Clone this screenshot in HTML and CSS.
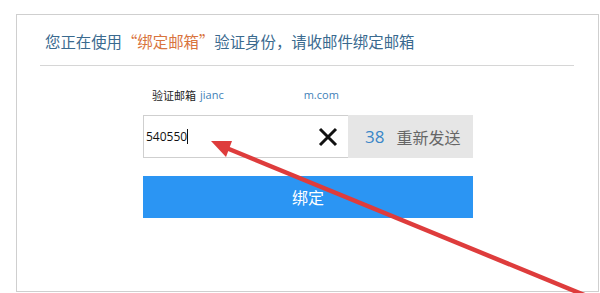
FILE: index.html
```html
<!DOCTYPE html>
<html lang="zh-CN">
<head>
    <meta charset="UTF-8">
    <meta name="viewport" content="width=device-width, initial-scale=1.0">
    <title>绑定邮箱</title>
    <link rel="stylesheet" href="styles.css">
</head>
<body>
    <div class="card">
        <h1 class="title">您正在使用<span class="hl">“绑定邮箱”</span>验证身份，请收邮件绑定邮箱</h1>
        <div class="divider"></div>

        <div class="form">
            <div class="email-row">
                <span class="label">验证邮箱</span>
                <span class="email">jianc</span>
                <span class="mask"></span>
                <span class="email">m.com</span>
            </div>

            <div class="code-row">
                <div class="code-input">
                    <span class="code-text">540550</span><span class="caret"></span>
                    <svg class="clear" width="20" height="20" viewBox="0 0 20 20">
                        <path d="M2 2 L18 18 M18 2 L2 18" stroke="#111" stroke-width="3" fill="none"/>
                    </svg>
                </div>
                <div class="resend"><span class="count">38</span>重新发送</div>
            </div>

            <button class="bind-btn">绑定</button>
        </div>
    </div>

    <!-- annotation arrow -->
    <svg class="arrow" width="600" height="293" viewBox="0 0 600 293">
        <line x1="224" y1="147" x2="594" y2="299" stroke="#de3c3c" stroke-width="4.5"/>
        <polygon points="211,141 232,141 226,157" fill="#de3c3c"/>
    </svg>
</body>
</html>
```

FILE: styles.css
```css
* {
    margin: 0;
    padding: 0;
    box-sizing: border-box;
}

body {
    background: #fff;
    font-family: "Noto Sans CJK SC", "Open Sans", sans-serif;
    width: 600px;
    height: 293px;
    overflow: hidden;
    position: relative;
}

.card {
    margin: 14px 1px 0 16px;
    height: 278px;
    border: 1px solid #cfcfcf;
    padding: 15px 24px 0 23px;
}

.title {
    font-size: 15.4px;
    font-weight: 400;
    color: #3a6a8f;
    line-height: 22px;
    padding-left: 5px;
}

.hl {
    color: #d9743e;
}

.divider {
    margin-top: 13px;
    height: 1px;
    background: #d6d6d6;
}

.form {
    width: 330px;
    margin-left: 103px;
    padding-top: 20px;
}

.email-row {
    display: flex;
    align-items: center;
    padding-left: 9px;
    font-size: 11px;
    line-height: 18px;
}

.label {
    color: #222;
    margin-right: 4px;
}

.email {
    color: #3e7fb8;
    font-family: "Open Sans", sans-serif;
}

.mask {
    width: 80px;
}

.code-row {
    display: flex;
    margin-top: 11px;
    height: 43px;
}

.code-input {
    width: 205px;
    border: 1px solid #cfcfcf;
    border-right: none;
    display: flex;
    align-items: center;
    padding-left: 2px;
}

.code-text {
    font-family: "Open Sans", sans-serif;
    font-size: 12px;
    color: #111;
}

.caret {
    width: 1px;
    height: 15px;
    background: #111;
}

.clear {
    margin-left: auto;
    margin-right: 10px;
}

.resend {
    flex: 1;
    background: #e6e6e6;
    display: flex;
    align-items: center;
    padding-left: 17px;
    font-size: 16px;
    color: #666;
}

.count {
    color: #3a86c8;
    font-family: "Open Sans", sans-serif;
    font-size: 17px;
    margin-right: 12px;
}

.bind-btn {
    display: block;
    width: 100%;
    height: 42px;
    margin-top: 18px;
    border: none;
    background: #2b95f3;
    color: #fff;
    font-family: "Noto Sans CJK SC", sans-serif;
    font-size: 16px;
}

.arrow {
    position: absolute;
    left: 0;
    top: 0;
    pointer-events: none;
}
```
